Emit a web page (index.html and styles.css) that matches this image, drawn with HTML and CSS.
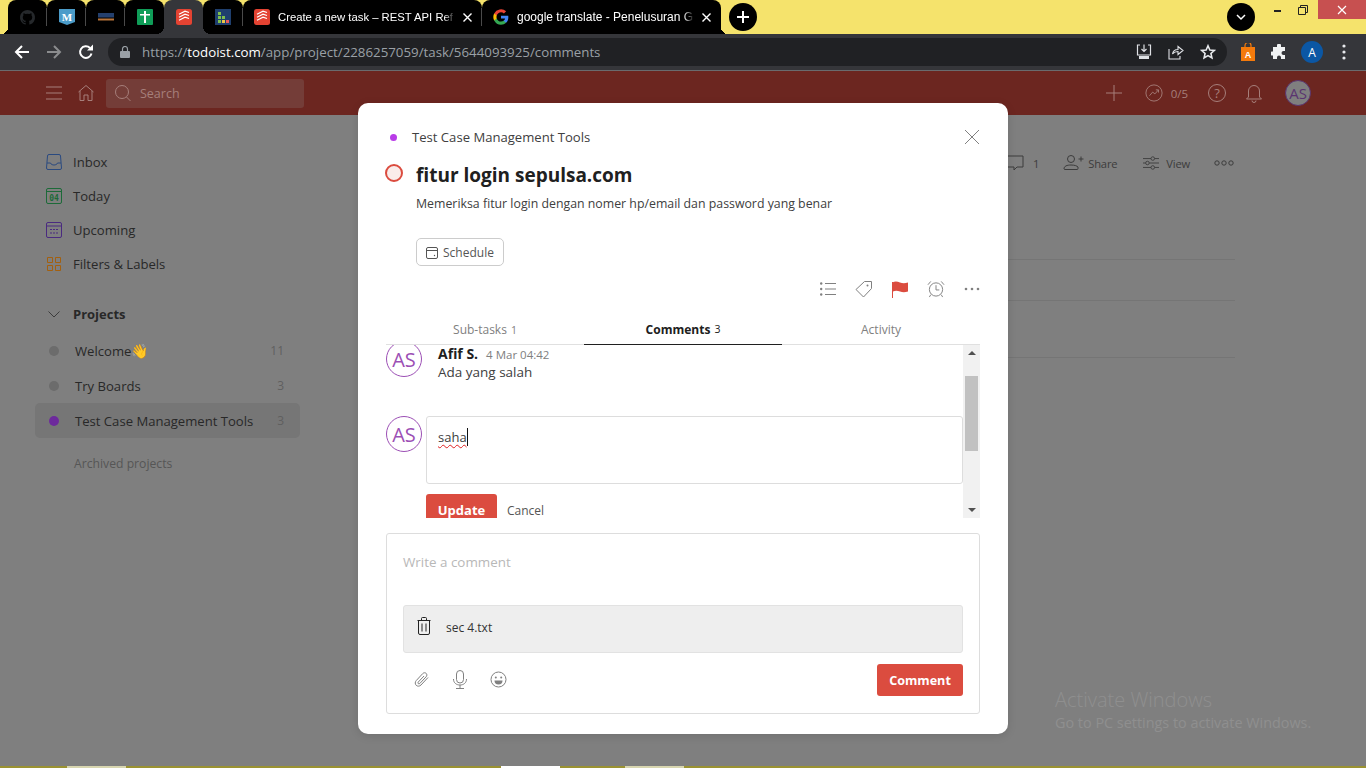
FILE: index.html
```html
<!DOCTYPE html>
<html lang="en">
<head>
  <meta charset="UTF-8" />
  <title>Test Case Management Tools: Todoist</title>
  <link rel="stylesheet" href="styles.css">
</head>
<body>

  <!-- browser tab strip -->
  <div class="tabstrip">
    <div class="tabs">
      <div class="tab tab-icon tab-first tab-sep"><svg width="17" height="17" viewBox="0 0 24 24"><path fill="#25282b" d="M12 1.500a10.500 10.500 0 0 0-3.300 20.500c.5.100.7-.2.7-.5v-2c-2.900.6-3.500-1.200-3.500-1.200-.5-1.200-1.200-1.500-1.200-1.500-1-.7.100-.7.100-.7 1 .1 1.600 1.100 1.600 1.100.9 1.600 2.500 1.100 3 .9.100-.7.4-1.100.7-1.400-2.300-.3-4.800-1.200-4.800-5.200 0-1.100.4-2 1.100-2.800-.1-.3-.5-1.300.1-2.800 0 0 .9-.3 2.900 1.100a10 10 0 0 1 5.200 0c2-1.400 2.900-1.100 2.900-1.100.6 1.500.2 2.500.1 2.800.7.800 1.100 1.700 1.100 2.800 0 4-2.500 4.900-4.800 5.200.4.300.7 1 .7 1.900v2.900c0 .3.2.6.7.5A10.500 10.500 0 0 0 12 1.500z"/></svg></div>
      <div class="tab tab-icon tab-sep"><svg width="16" height="16" viewBox="0 0 16 16"><path fill="#4b9cc9" d="M0 0h16v13l-8 3-8-3z"/><text x="8" y="11.500" class="fav-m">M</text></svg></div>
      <div class="tab tab-icon tab-sep"><svg width="16" height="8" viewBox="0 0 16 8"><rect width="16" height="4.500" fill="#24406e"/><rect y="5.500" width="16" height="2" fill="#b8743a"/></svg></div>
      <div class="tab tab-icon"><svg width="16" height="16" viewBox="0 0 16 16"><rect width="16" height="16" rx="1" fill="#0f9d58"/><path fill="#fff" d="M7 2h2v3h4v1.500H9V14H7V6.500H3V5h4z"/></svg></div>
      <div class="tab tab-icon tab-active"><svg width="16" height="16" viewBox="0 0 16 16"><use href="#todoist-mark"/></svg></div>
      <div class="tab tab-icon tab-wider tab-sep"><svg width="16" height="16" viewBox="0 0 16 16"><rect width="16" height="16" fill="#1f3f6e"/><rect x="3" y="3" width="3" height="3" fill="#7fbf4d"/><rect x="3" y="7" width="3" height="3" fill="#7fbf4d"/><rect x="7" y="7" width="3" height="3" fill="#7fbf4d"/><rect x="3" y="11" width="3" height="3" fill="#7fbf4d"/><rect x="7" y="11" width="3" height="3" fill="#e8c547"/><rect x="11" y="11" width="3" height="3" fill="#e85a5a"/></svg></div>
      <div class="tab tab-wide tab-sep">
        <svg width="16" height="16" viewBox="0 0 16 16"><use href="#todoist-mark"/></svg>
        <span class="tab-title">Create a new task – REST API Ref</span>
        <svg width="9" height="9" viewBox="0 0 9 9"><path d="M.5.500l8 8M8.500.500l-8 8" stroke="#fff" stroke-width="1.400"/></svg>
      </div>
      <div class="tab tab-wide tab-last">
        <svg width="16" height="16" viewBox="0 0 48 48"><path fill="#4285f4" d="M46 24.500c0-1.600-.1-3.100-.4-4.500H24v8.500h12.400c-.5 2.900-2.100 5.300-4.600 7v5.800h7.400c4.300-4 6.800-9.900 6.800-16.800z"/><path fill="#34a853" d="M24 47c6.200 0 11.400-2 15.200-5.600l-7.400-5.800c-2 1.400-4.700 2.200-7.800 2.200-6 0-11-4-12.800-9.500H3.500v6A23 23 0 0 0 24 47z"/><path fill="#fbbc05" d="M11.200 28.300a13.800 13.800 0 0 1 0-8.700v-6H3.500a23 23 0 0 0 0 20.700z"/><path fill="#ea4335" d="M24 10.100c3.400 0 6.400 1.200 8.800 3.400l6.600-6.600A23 23 0 0 0 3.500 13.700l7.700 6c1.800-5.500 6.800-9.600 12.800-9.600z"/></svg>
        <span class="tab-title tab-title-wide">google translate - Penelusuran G</span>
        <svg width="9" height="9" viewBox="0 0 9 9"><path d="M.5.500l8 8M8.500.500l-8 8" stroke="#fff" stroke-width="1.400"/></svg>
      </div>
      <div class="round-btn"><svg width="14" height="14" viewBox="0 0 14 14"><path d="M7 1v12M1 7h12" stroke="#fff" stroke-width="2"/></svg></div>
    </div>
    <div class="window-controls">
      <div class="round-btn"><svg width="12" height="8" viewBox="0 0 12 8"><path d="M2 2l4 4 4-4" fill="none" stroke="#fff" stroke-width="1.500"/></svg></div>
      <div class="win-btn win-min"><svg width="10" height="10" viewBox="0 0 10 10"><path d="M1 6h7" stroke="#222" stroke-width="2"/></svg></div>
      <div class="win-btn"><svg width="12" height="12" viewBox="0 0 12 12"><path d="M1.500 3.500h7v7h-7zM3.500 3.500v-2h7v7h-2" fill="none" stroke="#222" stroke-width="1"/></svg></div>
      <div class="win-btn win-close"><svg width="10" height="10" viewBox="0 0 10 10"><path d="M1 1l8 8M9 1l-8 8" stroke="#fff" stroke-width="1.200"/></svg></div>
    </div>
  </div>

  <!-- browser toolbar -->
  <div class="toolbar">
    <div class="nav-btns">
      <svg width="16" height="16" viewBox="0 0 16 16"><path d="M15 8H2M8 2L2 8l6 6" fill="none" stroke="#fff" stroke-width="2"/></svg>
      <svg width="16" height="16" viewBox="0 0 16 16"><path d="M1 8h13M8 2l6 6-6 6" fill="none" stroke="#8b8c8e" stroke-width="2"/></svg>
      <svg width="16" height="16" viewBox="0 0 16 16"><path d="M13.500 9.500A5.800 5.800 0 1 1 12 4" fill="none" stroke="#fff" stroke-width="2"/><path d="M9 6.500h6v-6z" fill="#fff"/></svg>
    </div>
    <div class="omnibox">
      <svg width="10" height="12" viewBox="0 0 10 12"><rect y="5" width="10" height="7" rx="1" fill="#9aa0a6"/><path d="M2.500 5.500V3a2.500 2.500 0 0 1 5 0v2.500" fill="none" stroke="#9aa0a6" stroke-width="1.200"/></svg>
      <span class="url"><span class="url-dim">https://</span>todoist.com<span class="url-dim">/app/project/2286257059/task/5644093925/comments</span></span>
      <div class="omni-icons">
        <svg width="16" height="16" viewBox="0 0 16 16"><path d="M4 1H1.500v10h13V1H12M8 .5v7M5.500 5L8 7.500 10.500 5" fill="none" stroke="#dfe1e5" stroke-width="1.200"/><rect x="3" y="12" width="10" height="3" fill="#dfe1e5"/></svg>
        <svg width="16" height="16" viewBox="0 0 16 16"><path d="M1 5v10h11v-3M4.500 10c.5-3 3-4.500 5.500-4.500V2.500l5 4-5 4v-3c-2 0-4 .5-5.500 2.500z" fill="none" stroke="#dfe1e5" stroke-width="1.100"/></svg>
        <svg width="16" height="16" viewBox="0 0 18 18"><path d="M9 2l2.100 4.700 5 .5-3.800 3.400 1.100 5L9 13l-4.400 2.600 1.100-5L1.900 7.200l5-.5z" fill="none" stroke="#e8eaed" stroke-width="1.800"/></svg>
      </div>
    </div>
    <div class="ext-icons">
      <svg width="16" height="18" viewBox="0 0 16 18"><rect x="1" y="4" width="14" height="14" fill="#f47a0c"/><path d="M5 5V2.500a3 3 0 0 1 6 0V5" fill="none" stroke="#f47a0c" stroke-width="1.200"/><text x="8" y="15" class="fav-a">A</text></svg>
      <svg width="16" height="16" viewBox="0 0 16 16"><path fill="#f1f3f4" d="M6 1.500a2 2 0 0 1 4 0V3h4v4h-1.500a2 2 0 0 0 0 4H14v4h-4v-1.500a2 2 0 0 0-4 0V15H2v-3.500H1a2 2 0 0 1 0-4h1V3h4z"/></svg>
      <div class="profile-dot">A</div>
      <svg width="4" height="16" viewBox="0 0 4 16"><circle cx="2" cy="2" r="1.600" fill="#e8eaed"/><circle cx="2" cy="8" r="1.600" fill="#e8eaed"/><circle cx="2" cy="14" r="1.600" fill="#e8eaed"/></svg>
    </div>
  </div>

  <!-- todoist page, dimmed behind the modal -->
  <div class="app">
    <header class="topbar">
      <div class="topbar-left">
        <svg width="16" height="14" viewBox="0 0 16 14"><path d="M0 1h16M0 7h16M0 13h16" stroke="#a67f7b" stroke-width="1"/></svg>
        <svg width="18" height="18" viewBox="0 0 18 18"><path d="M1.500 8L9 1.500 16.500 8M3 7v9.500h4V11h4v5.500h4V7" fill="none" stroke="#a67f7b" stroke-width="1"/></svg>
        <div class="search">
          <svg width="20" height="20" viewBox="0 0 20 20"><circle cx="9" cy="9" r="6.500" fill="none" stroke="#a67f7b"/><path d="M13.500 14l4 4" stroke="#a67f7b"/></svg>
          <span>Search</span>
        </div>
      </div>
      <div class="topbar-right">
        <svg width="16" height="16" viewBox="0 0 16 16"><path d="M8 0v16M0 8h16" stroke="#a67f7b"/></svg>
        <div class="karma">
          <svg width="18" height="18" viewBox="0 0 20 20"><circle cx="10" cy="10" r="9" fill="none" stroke="#a67f7b"/><path d="M5 13l3.500-4 2.500 2 4-4.500M12 6.500h3v3" fill="none" stroke="#a67f7b"/></svg>
          <span>0/5</span>
        </div>
        <svg width="18" height="18" viewBox="0 0 18 18"><circle cx="9" cy="9" r="8.500" fill="none" stroke="#a67f7b"/><text x="9" y="13.500" class="tb-q">?</text></svg>
        <svg width="16" height="20" viewBox="0 0 16 20"><path d="M2.500 14V8a5.500 5.500 0 0 1 11 0v6l2 2H.5zM6 17.500a2 2 0 0 0 4 0" fill="none" stroke="#a67f7b"/></svg>
        <div class="tb-avatar">AS</div>
      </div>
    </header>

    <div class="app-body">
      <nav class="sidebar">
        <ul class="filters">
          <li><svg width="16" height="16" viewBox="0 0 16 16"><path d="M3 .5h10a1.500 1.500 0 0 1 1.500 1.500l1 12a1.500 1.500 0 0 1-1.500 1.500H2A1.500 1.500 0 0 1 .5 14L1.500 2A1.500 1.500 0 0 1 3 .5zM1 9h3.500c.5 1.500 2 2 3.500 2s3-.5 3.500-2H15" fill="none" stroke="#2a4a80"/></svg>Inbox</li>
          <li><svg width="16" height="16" viewBox="0 0 16 16"><rect x=".5" y=".5" width="15" height="15" rx="1.500" fill="none" stroke="#1c6a38"/><path d="M1 3.500h14" stroke="#1c6a38"/><text x="8" y="12.500" class="cal-num">04</text></svg>Today</li>
          <li><svg width="16" height="16" viewBox="0 0 16 16"><rect x=".5" y=".5" width="15" height="15" rx="1.500" fill="none" stroke="#4a2a80"/><path d="M1 4h14M4 7.500h2M7 7.500h2M10 7.500h2M4 11h2M7 11h2M10 11h2" stroke="#4a2a80"/></svg>Upcoming</li>
          <li><svg width="16" height="16" viewBox="0 0 16 16"><path d="M1.500 1.500h5v5h-5zM9.500 1.500h5v5h-5zM1.500 9.500h5v5h-5zM9.500 9.500h5v5h-5z" fill="none" stroke="#a3600f"/></svg>Filters &amp; Labels</li>
        </ul>
        <div class="projects-head">
          <svg width="12" height="7" viewBox="0 0 12 7"><path d="M.5.500L6 6 11.500.500" fill="none" stroke="#3c3c3c"/></svg>
          <span>Projects</span>
        </div>
        <ul class="projects">
          <li><i class="dot dot-grey"></i><span class="p-name">Welcome<span class="wave">👋</span></span><span class="p-count">11</span></li>
          <li><i class="dot dot-grey"></i><span class="p-name">Try Boards</span><span class="p-count">3</span></li>
          <li class="selected"><i class="dot dot-purple"></i><span class="p-name">Test Case Management Tools</span><span class="p-count">3</span></li>
        </ul>
        <div class="archived">Archived projects</div>
      </nav>

      <main class="content">
        <div class="view-actions">
          <span class="va va-comment"><svg width="18" height="18" viewBox="0 0 18 18"><path d="M1 2h16v11h-6l-3 3v-3H1z" fill="none" stroke="#3c3c3c"/></svg>1</span>
          <span class="va va-share"><svg width="21" height="18" viewBox="0 0 21 18"><circle cx="8" cy="5" r="3.500" fill="none" stroke="#3c3c3c"/><path d="M1 15c0-3 3-4 7-4s6 1 7 2v1.500a1 1 0 0 1-1 1H2a1 1 0 0 1-1-.5zM15.500 5h5M18 2.500v5" fill="none" stroke="#3c3c3c"/></svg>Share</span>
          <span class="va"><svg width="16" height="16" viewBox="0 0 18 16"><path d="M0 3h9M13 3h5M0 8h3M7 8h11M0 13h9M13 13h5" stroke="#3c3c3c"/><circle cx="11" cy="3" r="2" fill="none" stroke="#3c3c3c"/><circle cx="5" cy="8" r="2" fill="none" stroke="#3c3c3c"/><circle cx="11" cy="13" r="2" fill="none" stroke="#3c3c3c"/></svg>View</span>
          <svg width="20" height="6" viewBox="0 0 20 6"><circle cx="3" cy="3" r="2.200" fill="none" stroke="#3c3c3c"/><circle cx="10" cy="3" r="2.200" fill="none" stroke="#3c3c3c"/><circle cx="17" cy="3" r="2.200" fill="none" stroke="#3c3c3c"/></svg>
        </div>
        <div class="rule rule-1"></div>
        <div class="rule rule-2"></div>
        <div class="rule rule-3"></div>
      </main>
    </div>

    <div class="watermark">
      <div class="wm-title">Activate Windows</div>
      <div class="wm-sub">Go to PC settings to activate Windows.</div>
    </div>
    <div class="bottom-strip">
      <span class="thumb thumb-1"></span>
      <span class="thumb thumb-2"></span>
      <span class="thumb thumb-3"></span>
    </div>
  </div>

  <!-- task modal -->
  <section class="modal">
    <div class="modal-head">
      <div class="crumb"><i class="crumb-dot"></i>Test Case Management Tools</div>
      <svg width="16" height="16" viewBox="0 0 16 16"><path d="M1 1l14 14M15 1L1 15" stroke="#808080" stroke-width="1"/></svg>
    </div>

    <div class="task">
      <i class="check"></i>
      <div class="task-text">
        <h1>fitur login sepulsa.com</h1>
        <p>Memeriksa fitur login dengan nomer hp/email dan password yang benar</p>
        <button class="schedule"><svg width="12" height="12" viewBox="0 0 12 12"><rect x=".5" y=".5" width="11" height="11" rx="1.500" fill="none" stroke="#555"/><path d="M1 3.500h10" stroke="#555"/><circle cx="8.500" cy="8.500" r=".7" fill="#555"/></svg>Schedule</button>
      </div>
    </div>

    <div class="task-actions">
      <svg width="16" height="16" viewBox="0 0 16 16"><path d="M5 2.500h11M5 8h11M5 13.500h11" stroke="#808080"/><circle cx="1.200" cy="2.500" r="1.200" fill="#808080"/><circle cx="1.200" cy="8" r="1.200" fill="#808080"/><circle cx="1.200" cy="13.500" r="1.200" fill="#808080"/></svg>
      <svg width="18" height="18" viewBox="0 0 18 18"><path d="M1 9.500L9.500 1.500h7v7L8.500 17z" fill="none" stroke="#808080" stroke-linejoin="round"/><circle cx="12.500" cy="5.500" r="1" fill="#808080"/></svg>
      <svg width="16" height="17" viewBox="0 0 16 17"><path d="M.5 17V1.500C3 0 5.500.5 8 1.500s5 1 8 0v9c-3 1-5.500 1-8 0s-5-1-7 0" fill="#db4c3f"/><path d="M.5 1v16" stroke="#db4c3f"/></svg>
      <svg width="18" height="18" viewBox="0 0 19 19"><circle cx="9.500" cy="10" r="7" fill="none" stroke="#808080"/><path d="M9.500 5.500V10.500h3.500M1 5l3-3.500M18 5l-3-3.500M4 15.500L2.500 18M15 15.500l1.500 2.500" fill="none" stroke="#808080"/></svg>
      <svg width="16" height="4" viewBox="0 0 16 4"><circle cx="2" cy="2" r="1.300" fill="#808080"/><circle cx="8" cy="2" r="1.300" fill="#808080"/><circle cx="14" cy="2" r="1.300" fill="#808080"/></svg>
    </div>

    <div class="tabs-row">
      <div class="dtab">Sub-tasks <small>1</small></div>
      <div class="dtab dtab-on">Comments <small>3</small></div>
      <div class="dtab">Activity</div>
    </div>

    <div class="comment-pane">
      <div class="comment-scroll">
        <div class="comment">
          <div class="avatar avatar-cut">AS</div>
          <div class="comment-body">
            <div class="comment-meta"><b>Afif S.</b><span>4 Mar 04:42</span></div>
            <div>Ada yang salah</div>
          </div>
        </div>
        <div class="edit-row">
          <div class="avatar">AS</div>
          <div class="edit-col">
            <div class="edit-box"><span class="typo">saha</span><i class="caret"></i></div>
            <div class="edit-btns">
              <button class="btn-red btn-update">Update</button>
              <span class="cancel">Cancel</span>
            </div>
          </div>
        </div>
      </div>
      <div class="scrollbar">
        <i class="arrow-up"></i>
        <div class="sb-track"><div class="sb-thumb"></div></div>
        <i class="arrow-down"></i>
      </div>
    </div>

    <div class="composer">
      <div class="placeholder">Write a comment</div>
      <div class="attachment">
        <svg width="14" height="18" viewBox="0 0 14 18"><path d="M.5 3.500h13M4.500 3V1.500a1 1 0 0 1 1-1h3a1 1 0 0 1 1 1V3M1.500 3.500v12.500a1.500 1.500 0 0 0 1.500 1.500h8a1.500 1.500 0 0 0 1.500-1.500V3.500M5 6.500v8M9 6.500v8" fill="none" stroke="#222"/></svg>
        <span>sec 4.txt</span>
      </div>
      <div class="composer-foot">
        <div class="composer-icons">
          <svg width="16" height="17" viewBox="0 0 16 17"><path d="M14 6.500L7 14c-1.500 1.500-3.500 1.500-4.800.3S.9 11 2.300 9.500l6.500-7c1-1 2.500-1 3.400-.1s.9 2.400-.1 3.400l-6.300 6.700c-.5.500-1.200.5-1.600.1s-.4-1.100.1-1.600L10 5" fill="none" stroke="#808080"/></svg>
          <svg width="14" height="19" viewBox="0 0 14 19"><rect x="3.500" y=".5" width="7" height="12.500" rx="3.500" fill="none" stroke="#808080"/><path d="M.5 9c0 4 3 6 6.500 6s6.500-2 6.500-6M7 15v3.500M3 18.500h8" fill="none" stroke="#808080"/></svg>
          <svg width="17" height="17" viewBox="0 0 17 17"><circle cx="8.500" cy="8.500" r="7.500" fill="none" stroke="#808080"/><circle cx="5.800" cy="6.500" r="1" fill="#808080"/><circle cx="11.200" cy="6.500" r="1" fill="#808080"/><path d="M4.500 9.500h8a4 4 0 0 1-8 0z" fill="#808080"/></svg>
        </div>
        <button class="btn-red btn-comment">Comment</button>
      </div>
    </div>
  </section>

  <svg width="0" height="0" class="defs">
    <defs>
      <g id="todoist-mark">
        <rect width="16" height="16" rx="2.500" fill="#e44332"/>
        <path d="M3 5.200l6-3 4 1.300M3 8.200l6-3 4 1.300M3 11.200l6-3 4 1.300" fill="none" stroke="#fff" stroke-width="1.200"/>
      </g>
    </defs>
  </svg>

</body>
</html>
```

FILE: styles.css
```css
* {
  box-sizing: border-box;
}

html, body {
  height: 768px;
  overflow: hidden;
}

body {
  margin: 0;
  font-family: 'Open Sans', sans-serif;
  font-size: 13px;
  color: #202020;
  background: #7f7f7f;
  display: flex;
  flex-direction: column;
  position: relative;
}

ul {
  list-style: none;
  margin: 0;
  padding: 0;
}

button {
  font-family: inherit;
}

.defs {
  position: absolute;
}

/* tab strip */
.tabstrip {
  height: 34px;
  background: #f5e36c;
  display: flex;
  justify-content: space-between;
  flex: none;
}

.tabs {
  display: flex;
  align-items: stretch;
  padding-left: 8px;
}

.tab {
  background: #000;
  display: flex;
  align-items: center;
  height: 34px;
  position: relative;
  border-radius: 8px 8px 0 0;
}

.tab-sep::after {
  content: "";
  position: absolute;
  right: 0;
  top: 8px;
  width: 1px;
  height: 18px;
  background: #4a4a4a;
}

.tab-icon {
  width: 39px;
  justify-content: center;
}

.tab-wider {
  width: 40px;
}

.tab-active {
  background: #35363a;
  z-index: 1;
}

.tab-active::before,
.tab-active::after {
  content: "";
  position: absolute;
  bottom: 0;
  width: 8px;
  height: 8px;
}

.tab-active::before {
  left: -8px;
  background: radial-gradient(circle at 0 0, #000 8px, #35363a 8px);
}

.tab-active::after {
  right: -8px;
  background: radial-gradient(circle at 100% 0, #000 8px, #35363a 8px);
}

.tab-wide {
  width: 239px;
  padding: 0 10px 0 11px;
  gap: 8px;
}

.tab-last {
  border-bottom-right-radius: 0;
}

.tab-last::after {
  content: "";
  position: absolute;
  left: 100%;
  bottom: 0;
  width: 7px;
  height: 7px;
  background: radial-gradient(circle at 100% 0, #f5e36c 7px, #000 7px);
}

.tab-first::before {
  content: "";
  position: absolute;
  right: 100%;
  bottom: 0;
  width: 7px;
  height: 7px;
  background: radial-gradient(circle at 0 0, #f5e36c 7px, #000 7px);
}

.tab-title {
  flex: 1;
  min-width: 0;
  white-space: nowrap;
  color: #fff;
  font-family: 'Liberation Sans', sans-serif;
  font-size: 11.300px;
  -webkit-mask-image: linear-gradient(to right, #000 94%, transparent);
  mask-image: linear-gradient(to right, #000 94%, transparent);
}

.tab-title-wide {
  font-size: 12px;
}

.round-btn {
  width: 28px;
  height: 28px;
  border-radius: 50%;
  background: #000;
  display: flex;
  align-items: center;
  justify-content: center;
  margin: 3px 0 0 8px;
}

.window-controls {
  display: flex;
}

.window-controls .round-btn {
  margin: 3px 11px 0 0;
}

.win-btn {
  width: 25px;
  height: 19px;
  display: flex;
  align-items: center;
  justify-content: center;
}

.win-min {
  width: 24px;
}

.win-close {
  width: 48px;
  background: #c75050;
  margin-left: 3px;
}

/* toolbar */
.toolbar {
  height: 37px;
  background: #35363a;
  border-bottom: 1px solid #6a6b6e;
  display: flex;
  align-items: center;
  flex: none;
  padding: 0 0 0 14px;
}

.nav-btns {
  display: flex;
  gap: 16px;
  width: 94px;
}

.omnibox {
  width: 1119px;
  height: 28px;
  border-radius: 14px;
  background: #202124;
  display: flex;
  align-items: center;
  padding: 0 11px 0 12px;
}

.url {
  margin-left: 12px;
  font-size: 13.300px;
  color: #fff;
  white-space: nowrap;
}

.url-dim {
  color: #9aa0a6;
}

.omni-icons {
  margin-left: auto;
  display: flex;
  gap: 16px;
  align-items: center;
}

.ext-icons {
  display: flex;
  align-items: center;
  margin-left: 13px;
  gap: 15px;
}

.profile-dot {
  width: 22px;
  height: 22px;
  border-radius: 50%;
  background: #0b57a4;
  color: #fff;
  font-size: 12px;
  display: flex;
  align-items: center;
  justify-content: center;
  margin-left: -1px;
  margin-right: 4px;
}

.fav-m {
  font: bold 11px 'Liberation Serif', serif;
  fill: #fff;
  text-anchor: middle;
}

.fav-a {
  font: bold 9px 'Liberation Sans', sans-serif;
  fill: #fff;
  text-anchor: middle;
}

/* dimmed app */
.app {
  flex: 1;
  min-height: 0;
  display: flex;
  flex-direction: column;
  background: #7f7f7f;
  position: relative;
}

.topbar {
  height: 44px;
  background: #6c2620;
  display: flex;
  justify-content: space-between;
  align-items: center;
  padding: 0 55px 0 46px;
  flex: none;
}

.topbar-left {
  display: flex;
  align-items: center;
  gap: 15px;
}

.search {
  width: 198px;
  height: 29px;
  background: #743d38;
  border-radius: 3px;
  display: flex;
  align-items: center;
  gap: 7px;
  padding-left: 7px;
  color: #a67f7b;
  margin-left: -4px;
  font-size: 12.500px;
}

.topbar-right {
  display: flex;
  align-items: center;
  color: #a67f7b;
  gap: 20px;
}

.karma {
  display: flex;
  align-items: center;
  gap: 8px;
  font-size: 11.500px;
  margin-left: 3px;
}

.tb-q {
  font: 13px 'Open Sans', sans-serif;
  fill: #a67f7b;
  text-anchor: middle;
}

.tb-avatar {
  width: 26px;
  height: 26px;
  border-radius: 50%;
  background: #7f7f7f;
  border: 1.500px solid #5a3470;
  color: #5a3470;
  font-size: 15px;
  display: flex;
  align-items: center;
  justify-content: center;
  margin-left: 3px;
}

.app-body {
  flex: 1;
  min-height: 0;
  display: flex;
}

.sidebar {
  width: 300px;
  flex: none;
  padding: 30px 0 0 35px;
  color: #282828;
}

.filters li {
  height: 34px;
  display: flex;
  align-items: center;
  gap: 11px;
  padding-left: 11px;
  font-size: 13.100px;
}

.cal-num {
  font: bold 8px 'DejaVu Sans Mono', monospace;
  fill: #1c6a38;
  text-anchor: middle;
}

.projects-head {
  display: flex;
  align-items: center;
  gap: 13px;
  padding-left: 13px;
  margin-top: 19px;
  height: 28px;
  font-weight: 700;
  font-size: 13px;
}

.projects {
  margin-top: 5px;
}

.projects li {
  height: 35px;
  display: flex;
  align-items: center;
  padding: 0 16px 0 14px;
  font-size: 13.100px;
  border-radius: 5px;
}

.projects li.selected {
  background: #767676;
}

.dot {
  width: 10px;
  height: 10px;
  border-radius: 50%;
  flex: none;
  margin-right: 16px;
}

.dot-grey {
  background: #6c6c6c;
}

.dot-purple {
  background: #6d2a9c;
}

.p-name {
  flex: 1;
  white-space: nowrap;
}

.wave {
  font-size: 14px;
  color: #a08a3a;
}

.p-count {
  font-size: 12px;
  color: #5f5f5f;
}

.archived {
  margin-top: 17px;
  padding-left: 39px;
  font-size: 12.200px;
  color: #565656;
}

.content {
  flex: 1;
  position: relative;
}

.view-actions {
  display: flex;
  align-items: center;
  justify-content: flex-end;
  gap: 24px;
  margin: 39px 132px 0 0;
  color: #3c3c3c;
  font-size: 11.200px;
  letter-spacing: -.2px;
}

.va {
  display: flex;
  align-items: center;
  gap: 7px;
}

.va-comment {
  gap: 9px;
}

.va-share {
  gap: 4px;
  margin-right: 2px;
}

.rule {
  position: absolute;
  left: 100px;
  width: 835px;
  height: 1px;
  background: #757575;
}

.rule-1 {
  top: 144px;
}

.rule-2 {
  top: 185px;
}

.rule-3 {
  top: 242px;
}

.watermark {
  position: absolute;
  left: 1055px;
  top: 616px;
  color: #8f8f8f;
}

.wm-title {
  font-size: 20px;
  line-height: 26px;
  font-weight: 300;
}

.wm-sub {
  font-size: 14.400px;
  line-height: 20px;
}

.bottom-strip {
  position: absolute;
  left: 0;
  right: 0;
  bottom: 0;
  height: 2px;
  background: #9a9232;
  display: flex;
}

.thumb {
  height: 2px;
  background: #d8d6b0;
}

.thumb-1 {
  margin-left: 67px;
  width: 59px;
}

.thumb-2 {
  margin-left: 375px;
  width: 59px;
  background: #fff;
}

.thumb-3 {
  margin-left: 65px;
  width: 59px;
}

/* modal */
.modal {
  position: absolute;
  left: 358px;
  top: 103px;
  width: 650px;
  height: 631px;
  background: #fff;
  border-radius: 10px;
  box-shadow: 0 2px 10px rgba(0,0,0,0.12);
  padding: 0 28px;
  display: flex;
  flex-direction: column;
}

.modal-head {
  height: 50px;
  display: flex;
  align-items: center;
  justify-content: space-between;
  padding: 18px 0 0 4px;
  flex: none;
}

.crumb {
  display: flex;
  align-items: center;
  gap: 15px;
  font-size: 13.100px;
  color: #404040;
}

.crumb-dot {
  width: 7px;
  height: 7px;
  border-radius: 50%;
  background: #b93ce8;
}

.task {
  display: flex;
  flex: none;
  gap: 13px;
  padding-top: 9px;
}

.check {
  width: 18px;
  height: 18px;
  border-radius: 50%;
  border: 2px solid #db4c3f;
  background: #faecea;
  margin: 2px 0 0 -1px;
  flex: none;
}

.task-text h1 {
  margin: 0;
  font-size: 19px;
  line-height: 26px;
  font-weight: 700;
  color: #202020;
}

.task-text p {
  margin: 7px 0 0;
  font-size: 12.330px;
  line-height: 18px;
  color: #404040;
}

.schedule {
  display: flex;
  align-items: center;
  gap: 5px;
  height: 28px;
  width: 88px;
  margin-top: 25px;
  padding: 1px 0 0 9px;
  background: #fff;
  border: 1px solid #ccc;
  border-radius: 5px;
  color: #555;
  font-size: 12px;
}

.task-actions {
  display: flex;
  align-items: center;
  justify-content: flex-end;
  gap: 19px;
  height: 28px;
  margin-top: 9px;
  flex: none;
}

.tabs-row {
  display: flex;
  height: 31px;
  margin-top: 11px;
  border-bottom: 1px solid #e0e0e0;
  flex: none;
}

.dtab {
  flex: 1;
  display: flex;
  align-items: center;
  justify-content: center;
  gap: 4px;
  color: #808080;
  font-size: 12px;
  height: 31px;
}

.dtab small {
  font-size: 10.500px;
}

.dtab-on {
  color: #202020;
  font-weight: 700;
  border-bottom: 1px solid #202020;
}

.dtab-on small {
  font-weight: 400;
}

.comment-pane {
  height: 173px;
  display: flex;
  flex: none;
  overflow: hidden;
}

.comment-scroll {
  flex: 1;
  min-width: 0;
  overflow: hidden;
}

.comment {
  display: flex;
  gap: 16px;
  height: 71px;
}

.avatar {
  width: 36px;
  height: 36px;
  border-radius: 50%;
  border: 1.500px solid #9c4fb5;
  color: #9c4fb5;
  font-size: 20px;
  display: flex;
  align-items: center;
  justify-content: center;
  flex: none;
}

.avatar-cut {
  margin-top: -4px;
}

.comment-meta {
  display: flex;
  align-items: baseline;
  gap: 8px;
  height: 17px;
  line-height: 17px;
  color: #333;
}

.comment-meta b {
  color: #202020;
  font-size: 14px;
}

.comment-meta span {
  font-size: 11.500px;
  color: #808080;
}

.comment-body {
  font-size: 13.500px;
  line-height: 20px;
  color: #404040;
}

.edit-row {
  display: flex;
  gap: 4px;
}

.edit-col {
  flex: 1;
}

.edit-box {
  height: 68px;
  border: 1px solid #ddd;
  border-radius: 3px;
  padding: 11px 11px;
  font-size: 13px;
  line-height: 18px;
  color: #404040;
  display: flex;
  align-items: flex-start;
}

.typo {
  text-decoration: underline wavy #e02020 1px;
  text-underline-offset: 2px;
}

.caret {
  width: 1px;
  height: 18px;
  background: #111;
}

.edit-btns {
  display: flex;
  align-items: center;
  gap: 10px;
  margin-top: 10px;
}

.btn-red {
  background: #db4c3f;
  color: #fff;
  border: 0;
  border-radius: 3px;
  font-weight: 700;
  font-size: 13px;
}

.btn-update {
  width: 71px;
  height: 32px;
}

.cancel {
  font-size: 12px;
  color: #555;
}

.scrollbar {
  width: 17px;
  background: #f1f1f1;
  display: flex;
  flex-direction: column;
  align-items: center;
  flex: none;
}

.arrow-up, .arrow-down {
  width: 0;
  height: 0;
  border-left: 4px solid transparent;
  border-right: 4px solid transparent;
  margin: 6px 0;
  flex: none;
}

.arrow-up {
  border-bottom: 4px solid #505050;
}

.arrow-down {
  border-top: 4px solid #505050;
}

.sb-track {
  flex: 1;
  width: 100%;
  padding: 15px 2px 0;
}

.sb-thumb {
  height: 75px;
  background: #c1c1c1;
}

.composer {
  height: 181px;
  margin-top: 15px;
  border: 1px solid #ddd;
  border-radius: 3px;
  padding: 0 16px;
  flex: none;
}

.placeholder {
  height: 71px;
  padding-top: 19px;
  color: #b8b8b8;
  font-size: 13.400px;
  line-height: 18px;
}

.attachment {
  height: 48px;
  background: #eee;
  border: 1px solid #e2e2e2;
  border-radius: 3px;
  display: flex;
  align-items: flex-start;
  gap: 15px;
  padding: 11px 0 0 13px;
  font-size: 12px;
  line-height: 22px;
  color: #333;
}

.composer-foot {
  display: flex;
  align-items: center;
  justify-content: space-between;
  margin-top: 11px;
}

.composer-icons {
  display: flex;
  align-items: center;
  gap: 23px;
  padding-left: 11px;
  margin-top: -2px;
}

.btn-comment {
  width: 86px;
  height: 32px;
  font-size: 12.600px;
}
```
